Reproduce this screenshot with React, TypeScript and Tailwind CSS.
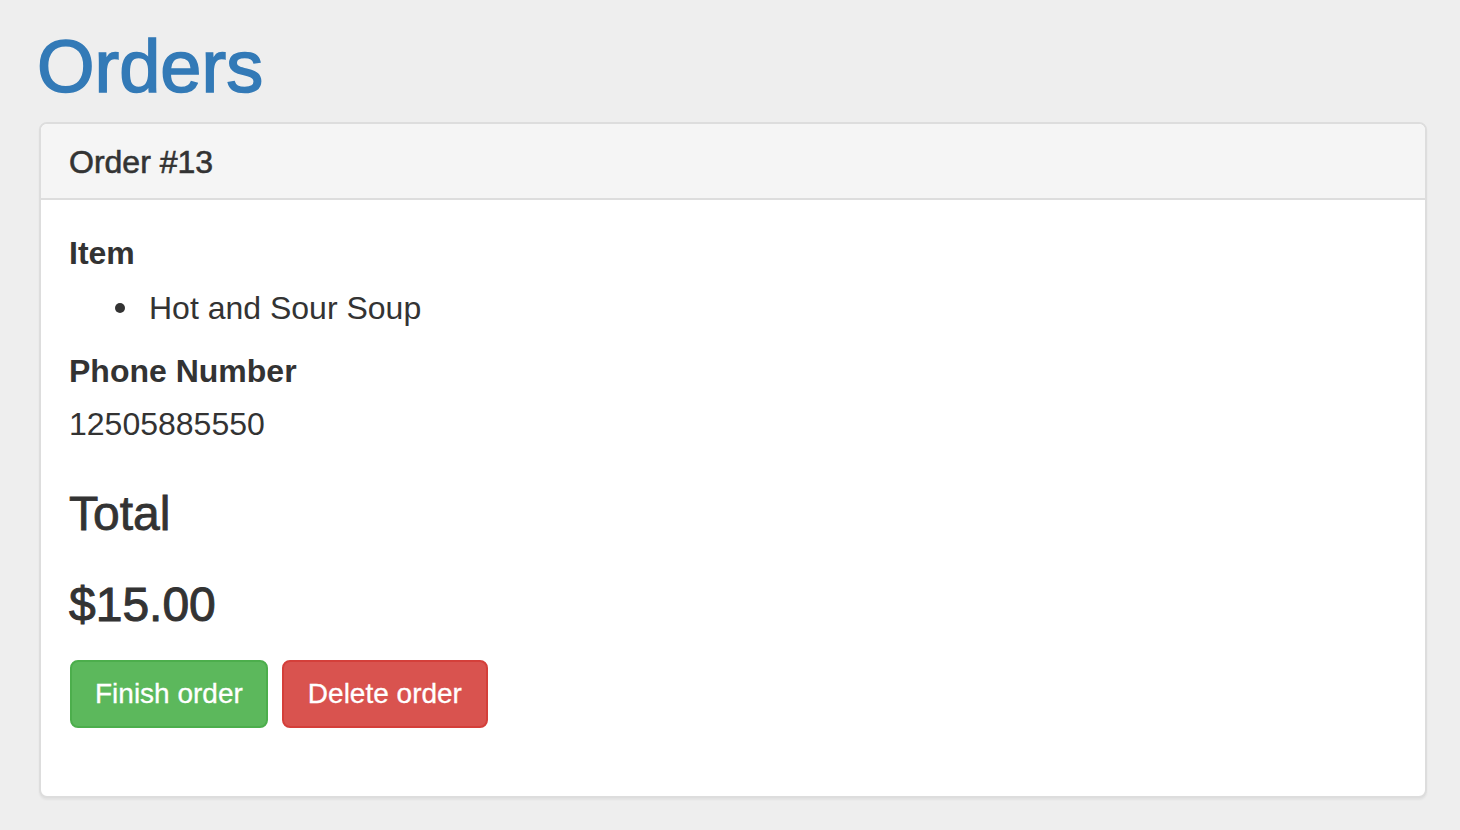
const order = {
  id: 13,
  items: ['Hot and Sour Soup'],
  phone: '12505885550',
  total: '$15.00',
};

export default function App() {
  return (
    <div className="min-h-screen bg-[#eeeeee] pl-[39px] pr-[33px] pt-[30px] font-['Liberation_Sans',Arial,sans-serif] text-[#333333]">
      <h1 className="-ml-[2px] text-[74px] leading-[74px] text-[#337ab7] [-webkit-text-stroke:1.6px_#337ab7]">
        Orders
      </h1>

      <div className="mt-[18px] rounded-[8px] border-2 border-[#dddddd] bg-white shadow-[0_2px_2px_rgba(0,0,0,0.05)]">
        <div className="rounded-t-[6px] border-b-2 border-[#dddddd] bg-[#f5f5f5] px-[28px] pb-[18px] pt-[21px]">
          <h3 className="text-[32px] leading-[35px] [-webkit-text-stroke:0.6px_#333333]">Order #{order.id}</h3>
        </div>

        <div className="px-[28px] pb-[68px] pt-[30px]">
          <div className="mb-[9px] text-[32px] font-bold leading-[46px]">Item</div>
          <ul className="mb-[17px] pl-[46px] text-[32px] leading-[46px]">
            {order.items.map((item) => (
              <li key={item} className="flex items-center">
                <span className="mr-[24px] h-[10px] w-[10px] rounded-full bg-[#333333]" />
                {item}
              </li>
            ))}
          </ul>

          <div className="mb-[7px] text-[32px] font-bold leading-[46px]">Phone Number</div>
          <p className="text-[32px] leading-[46px]">{order.phone}</p>

          <h3 className="mt-[40px] text-[48px] leading-[53px] [-webkit-text-stroke:0.8px_#333333]">Total</h3>
          <h3 className="mt-[38px] text-[48px] leading-[53px] [-webkit-text-stroke:1px_#333333]">{order.total}</h3>

          <div className="ml-[1px] mt-[29px] flex gap-[14px]">
            <button className="flex h-[68px] items-center rounded-[8px] border-2 border-[#4cae4c] bg-[#5cb85c] px-[23px] text-[28px] text-white [-webkit-text-stroke:0.3px_#ffffff]">
              Finish order
            </button>
            <button className="flex h-[68px] items-center rounded-[8px] border-2 border-[#d43f3a] bg-[#d9534f] px-[24px] text-[28px] text-white [-webkit-text-stroke:0.3px_#ffffff]">
              Delete order
            </button>
          </div>
        </div>
      </div>
    </div>
  );
}
